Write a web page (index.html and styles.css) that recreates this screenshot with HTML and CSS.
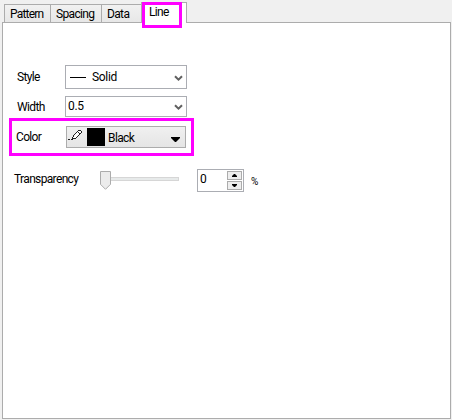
FILE: index.html
```html
<!DOCTYPE html>
<html lang="en">
<head>
<meta charset="utf-8">
<title>Line</title>
<link rel="stylesheet" href="styles.css">
</head>
<body>
<main class="dialog">
  <nav class="tabs">
    <div class="tab pattern"><span>Pattern</span></div>
    <div class="tab spacing"><span>Spacing</span></div>
    <div class="tab data"><span>Data</span></div>
    <div class="tab active"><span>Line</span><i class="tab-mark"></i></div>
  </nav>
  <section class="panel">
    <div class="row style-row">
      <span class="label">Style</span>
      <div class="select">
        <i class="dash"></i><span class="solid">Solid</span>
        <svg class="chevron" width="9" height="7" viewBox="0 0 9 7"><path d="M1 1.2 4.5 4.6 8 1.2" /></svg>
      </div>
    </div>
    <div class="row width-row">
      <span class="label">Width</span>
      <div class="select">
        <span class="value">0.5</span>
        <svg class="chevron" width="9" height="7" viewBox="0 0 9 7"><path d="M1 1.2 4.5 4.6 8 1.2" /></svg>
      </div>
    </div>
    <div class="row color-row">
      <span class="label">Color</span>
      <div class="color-button">
        <svg class="pen" width="16" height="12" viewBox="0 0 16 12" shape-rendering="crispEdges">
          <path class="pen-fill" d="M5 9 10 1 13 1 13 4 8 9z"/>
          <path class="pen-line" d="M0 10h2v1H0zM3 10h1v1H3zM4 8h1v3H4zM5 6h1v2H5zM6 5h1v1H6zM7 4h1v1H7zM8 3h1v1H8zM9 2h1v1H9zM10 1h3v1h-3zM13 2h1v2h-1zM12 4h1v1h-1zM11 5h1v1h-1zM10 6h1v1h-1zM9 7h1v1H9zM8 8h1v1H8zM5 9h3v1H5zM10 3h1v1h1v1h-1V4h-1z"/>
        </svg>
        <i class="swatch"></i><span>Black</span>
        <svg class="arrow" width="9" height="5" viewBox="0 0 9 5"><path d="M0 0h9v1L5 5H4L0 1z"/></svg>
      </div>
    </div>
    <div class="row opacity-row">
      <span class="label">Transparency</span>
      <div class="slider">
        <svg class="thumb" width="11" height="19" viewBox="0 0 11 19"><path d="M.5.5h10v12.8l-5 5-5-5z"/></svg>
        <i class="track"></i>
      </div>
      <div class="spinner">
        <span>0</span>
        <div class="steps">
          <i class="step"><svg width="5" height="3" viewBox="0 0 5 3"><path d="M2 0h1l2 2v1H0V2z"/></svg></i>
          <i class="step"><svg width="5" height="3" viewBox="0 0 5 3"><path d="M0 0h5v1L3 3H2L0 1z"/></svg></i>
        </div>
      </div>
      <span class="percent">%</span>
    </div>
  </section>
</main>
</body>
</html>
```
FILE: styles.css
```css
* { box-sizing: border-box; }
body { margin: 0; background: #f0f0f0; color: #000; font: 12px/14px Roboto, "Liberation Sans", sans-serif; letter-spacing: -0.3px; }
svg { display: block; flex: none; }
.dialog { width: 452px; height: 420px; padding: 2px 1px 1px 2px; display: flex; flex-direction: column; }
.tabs { display: flex; align-items: flex-end; height: 21px; margin: 0 0 -1px 2px; position: relative; }
.tab { height: 19px; border: 1px solid #acacac; border-right: 0; background: linear-gradient(#f1f1f1, #e7e7e7); padding: 2px 0 0 5px; white-space: nowrap; letter-spacing: -0.65px; }
.pattern { width: 46px; letter-spacing: -0.8px; }
.spacing { width: 51px; }
.data { width: 40px; }
.tab.active { width: 46px; height: 21px; background: #fff; border: 1px solid #acacac; border-bottom: 0; padding: 2px 0 0 7px; position: relative; }
.tab-mark { position: absolute; left: 0; top: -1px; width: 40px; height: 26px; border: 3px solid #f0f; }
.panel { flex: 1; border: 1px solid #acacac; background: #fff; padding: 42px 0 0 6px; }
.row { display: flex; align-items: center; width: 185px; }
.style-row { height: 24px; padding-left: 8px; }
.width-row { height: 21px; margin-top: 7px; padding-left: 8px; }
.label { white-space: nowrap; letter-spacing: -0.65px; }
.style-row .label, .width-row .label { width: 48px; }
.select { width: 122px; height: 100%; border: 1px solid #abadb3; display: flex; align-items: center; padding-right: 3px; }
.dash { width: 16px; height: 1px; margin-left: 4px; background: #000; }
.solid { margin-left: 6px; }
.value { margin: -2px 0 0 2px; }
.chevron { margin: 2px 0 0 auto; }
.chevron path { fill: none; stroke: #606060; stroke-width: 2; }
.color-row { height: 38px; margin-top: 1px; border: 3px solid #f0f; padding-left: 4px; }
.color-row .label { width: 50px; }
.color-button { width: 120px; height: 22px; border: 1px solid #acacac; background: linear-gradient(#f0f0f0, #e5e5e5); display: flex; align-items: center; padding-right: 5px; }
.color-button span { margin-top: 2px; letter-spacing: -0.6px; }
.pen { margin: -4px 0 0 1px; }
.pen-fill { fill: #fff; }
.pen-line { fill: #222; }
.swatch { width: 18px; height: 18px; margin: 0 3px; background: #000; }
.arrow { margin: 4px 0 0 auto; }
.opacity-row { width: 260px; height: 24px; margin-top: 12px; padding-left: 5px; }
.opacity-row .label { width: 86px; margin-top: -2px; }
.slider { width: 97px; height: 19px; display: flex; align-items: center; }
.thumb path { fill: #ececec; stroke: #acacac; }
.track { width: 68px; height: 4px; margin-top: -2px; background: #e7eaea; border: 1px solid #d6d6d6; border-left: 0; }
.spinner { width: 47px; height: 23px; border: 1px solid #abadb3; display: flex; align-items: center; padding: 0 1px 0 2px; }
.spinner > span { margin-top: -3px; }
.steps { margin-left: auto; display: grid; gap: 1px; }
.step { width: 15px; height: 9px; border: 1px solid #acacac; background: #eee; display: flex; align-items: center; justify-content: center; }
.percent { margin: 3px 0 0 7px; font-size: 10px; }
```
